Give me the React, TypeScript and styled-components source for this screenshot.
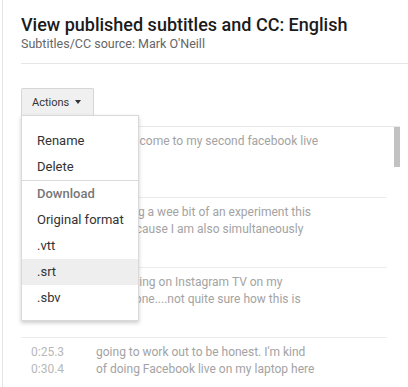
import styled, { createGlobalStyle } from "styled-components";

const GlobalStyle = createGlobalStyle`
  html, body {
    margin: 0;
    padding: 0;
    background: #fff;
    font-family: Roboto, "Liberation Sans", Arial, sans-serif;
    overflow: hidden;
  }
`;

type Caption = { start: string; end: string; text: string[] };

const captions: Caption[] = [
  { start: "0:00.0", end: "0:05.1", text: ["Hey, welcome to my second facebook live"] },
  { start: "0:05.1", end: "0:12.8", text: ["I'm doing a wee bit of an experiment this", "time because I am also simultaneously"] },
  { start: "0:12.8", end: "0:25.3", text: ["podcasting on Instagram TV on my", "own phone....not quite sure how this is"] },
  { start: "0:25.3", end: "0:30.4", text: ["going to work out to be honest. I'm kind", "of doing Facebook live on my laptop here"] },
  { start: "0:30.4", end: "0:36.2", text: ["and Instagram TV on my phone at the", "same time so let's see how it goes"] },
];

const menuItems: { label: string; kind?: "heading" | "divider"; active?: boolean }[] = [
  { label: "Rename" },
  { label: "Delete" },
  { label: "", kind: "divider" },
  { label: "Download", kind: "heading" },
  { label: "Original format" },
  { label: ".vtt" },
  { label: ".srt", active: true },
  { label: ".sbv" },
];

export default function App() {
  return (
    <>
      <GlobalStyle />
      <Page>
        <Header>
          <Title>View published subtitles and CC: English</Title>
          <Source>Subtitles/CC source: Mark O'Neill</Source>
        </Header>
        <Toolbar>
          <ActionsButton>
            Actions
            <Caret />
          </ActionsButton>
          <Menu>
            {menuItems.map((item, i) =>
              item.kind === "divider" ? (
                <MenuDivider key={i} />
              ) : (
                <MenuItem key={i} $heading={item.kind === "heading"} $active={item.active}>
                  {item.label}
                </MenuItem>
              )
            )}
          </Menu>
        </Toolbar>
        <CaptionPanel>
          <CaptionList>
            {captions.map((c, i) => (
              <CaptionRow key={i}>
                <Times>
                  <span>{c.start}</span>
                  <span>{c.end}</span>
                </Times>
                <Lines>
                  {c.text.map((t, j) => (
                    <span key={j}>{t}</span>
                  ))}
                </Lines>
              </CaptionRow>
            ))}
          </CaptionList>
          <ScrollTrack>
            <ScrollThumb />
          </ScrollTrack>
        </CaptionPanel>
      </Page>
    </>
  );
}

const Page = styled.div`
  height: 387px;
  margin-left: 2px;
  border-left: 1px solid #e4e4e4;
  padding-left: 18px;
  display: flex;
  flex-direction: column;
  overflow: hidden;
`;

const Header = styled.div`
  padding-top: 14px;
  padding-bottom: 11px;
  border-bottom: 1px solid #e6e6e6;
`;

const Title = styled.h1`
  margin: 0;
  font-size: 18px;
  line-height: 22px;
  font-weight: 500;
  color: #1b1b1b;
`;

const Source = styled.div`
  font-size: 12.5px;
  line-height: 16px;
  color: #666;
`;

const Toolbar = styled.div`
  position: relative;
  margin-top: 24px;
  margin-bottom: 11px;
  height: 27px;
`;

const ActionsButton = styled.button`
  height: 27px;
  width: 73px;
  box-sizing: border-box;
  padding: 0 0 0 10px;
  display: flex;
  align-items: center;
  gap: 6px;
  background: #f0f0f0;
  border: 1px solid #d6d6d6;
  border-bottom: none;
  border-radius: 2px 2px 0 0;
  font-family: inherit;
  font-size: 11px;
  color: #333;
`;

const Caret = styled.span`
  width: 0;
  height: 0;
  border-left: 3.5px solid transparent;
  border-right: 3.5px solid transparent;
  border-top: 4px solid #333;
  margin-bottom: 1px;
`;

const Menu = styled.div`
  position: absolute;
  top: 27px;
  left: 0;
  z-index: 2;
  width: 118px;
  box-sizing: border-box;
  padding: 12px 0 9px;
  background: #fff;
  border: 1px solid #d9d9d9;
  box-shadow: 0 2px 4px rgba(0, 0, 0, 0.2);
`;

const MenuItem = styled.div<{ $heading?: boolean; $active?: boolean }>`
  height: 26px;
  line-height: 26px;
  padding-left: 15px;
  font-size: 13px;
  white-space: nowrap;
  color: ${(p) => (p.$heading ? "#777" : "#333")};
  font-weight: ${(p) => (p.$heading ? 500 : 400)};
  background: ${(p) => (p.$active ? "#eeeeee" : "transparent")};
`;

const MenuDivider = styled.div`
  height: 1px;
  background: #d9d9d9;
`;

const CaptionPanel = styled.div`
  flex: 1;
  min-height: 0;
  margin-right: 8px;
  border-top: 1px solid #e8e8e8;
  display: flex;
  gap: 7px;
`;

const CaptionList = styled.div`
  flex: 1;
  overflow: hidden;
`;

const ScrollTrack = styled.div`
  width: 6px;
`;

const ScrollThumb = styled.div`
  height: 40px;
  background: #c2c2c2;
`;

const CaptionRow = styled.div`
  display: flex;
  height: 70px;
  box-sizing: border-box;
  padding-top: 6px;
  font-size: 12px;
  line-height: 17px;
  & + & {
    border-top: 1px solid #ececec;
  }
`;

const Times = styled.div`
  width: 75px;
  flex-shrink: 0;
  box-sizing: border-box;
  padding-left: 10px;
  display: flex;
  flex-direction: column;
  color: #b8b8b8;
`;

const Lines = styled.div`
  display: flex;
  flex-direction: column;
  color: #a3a3a3;
  white-space: nowrap;
`;
